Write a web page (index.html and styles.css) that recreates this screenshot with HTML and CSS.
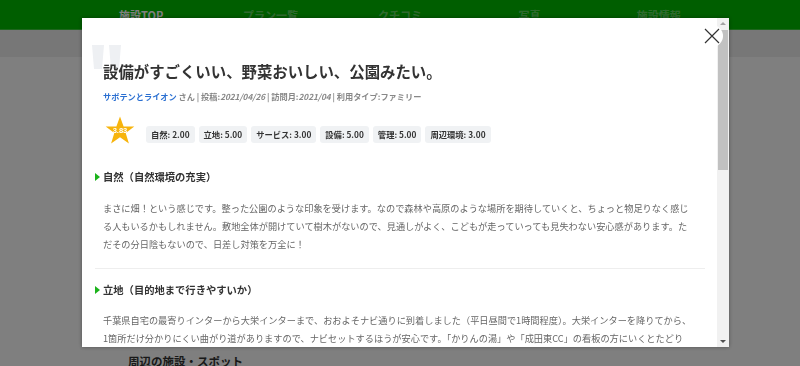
FILE: index.html
```html
<!DOCTYPE html>
<html lang="ja">
<head>
<meta charset="utf-8">
<title>クチコミ</title>
<link rel="stylesheet" href="styles.css">
</head>
<body>
<header class="topnav">
  <nav class="topnav-inner">
    <a class="nav-item active">施設TOP</a>
    <a class="nav-item">プラン一覧</a>
    <a class="nav-item">クチコミ</a>
    <a class="nav-item">写真</a>
    <a class="nav-item">施設情報</a>
  </nav>
</header>
<div class="subbar"></div>
<main class="page">
  <h2 class="page-heading">周辺の施設・スポット</h2>
</main>

<div class="overlay"></div>

<div class="modal">
  <svg class="quote" width="30" height="24" viewBox="0 0 30 24">
    <polygon points="0,0 12,0 10,24 2,24" fill="#eef0f3"/>
    <polygon points="17,0 29,0 27,24 19,24" fill="#eef0f3"/>
  </svg>
  <div class="modal-body">
    <h1 class="review-title">設備がすごくいい、野菜おいしい、公園みたい。</h1>
    <p class="meta"><span class="author">サボテンとライオン</span> さん | 投稿:<i>2021/04/26</i> | 訪問月:<i>2021/04</i> | 利用タイプ:ファミリー</p>
    <div class="ratings">
      <div class="star">
        <svg width="30" height="30" viewBox="0 0 30 30"><polygon points="15,0.5 18.6,10.6 29.3,10.6 20.7,17 23.9,27.5 15,21.2 6.1,27.5 9.3,17 0.7,10.6 11.4,10.6" fill="#f7b40c"/></svg>
        <span class="star-score">3.83</span>
      </div>
      <ul class="chips">
        <li class="chip">自然: 2.00</li>
        <li class="chip">立地: 5.00</li>
        <li class="chip">サービス: 3.00</li>
        <li class="chip">設備: 5.00</li>
        <li class="chip">管理: 5.00</li>
        <li class="chip">周辺環境: 3.00</li>
      </ul>
    </div>

    <section class="section">
      <h3 class="section-heading">自然（自然環境の充実）</h3>
      <p class="section-text">まさに畑！という感じです。整った公園のような印象を受けます。なので森林や高原のような場所を期待していくと、ちょっと物足りなく感じ<br>る人もいるかもしれません。敷地全体が開けていて樹木がないので、見通しがよく、こどもが走っていっても見失わない安心感があります。た<br>だその分日陰もないので、日差し対策を万全に！</p>
    </section>
    <hr class="divider">
    <section class="section">
      <h3 class="section-heading">立地（目的地まで行きやすいか）</h3>
      <p class="section-text">千葉県自宅の最寄りインターから大栄インターまで、おおよそナビ通りに到着しました（平日昼間で1時間程度）。大栄インターを降りてから、<br>1箇所だけ分かりにくい曲がり道がありますので、ナビセットするほうが安心です。「かりんの湯」や「成田東CC」の看板の方にいくとたどり<br>着けます。</p>
    </section>
  </div>
  <div class="scrollbar">
    <span class="sb-arrow up"></span>
    <span class="sb-thumb"></span>
    <span class="sb-track"></span>
    <span class="sb-arrow down"></span>
  </div>
  <button class="close" aria-label="閉じる">
    <svg width="16" height="16" viewBox="0 0 16 16"><path d="M1 1 L15 15 M15 1 L1 15" stroke="#333" stroke-width="1.2" fill="none"/></svg>
  </button>
</div>
</body>
</html>
```

FILE: styles.css
```css
* { box-sizing: border-box; }
html, body { margin: 0; padding: 0; }
body {
  font-family: "Noto Sans CJK JP", "Noto Sans", sans-serif;
  background: #fff;
  color: #333;
  height: 366px;
  overflow: hidden;
}

.topnav {
  height: 30px;
  background: #00bc00;
  border-bottom: 1px solid #3dcc3d;
}
.topnav-inner {
  width: 647px;
  margin: 0 auto;
  display: flex;
}
.nav-item {
  flex: 1;
  text-align: center;
  line-height: 30px;
  font-size: 11px;
  font-weight: bold;
  color: rgba(255,255,255,0.4);
}
.nav-item.active { color: #fff; }

.subbar {
  height: 27px;
  background: #eee;
}
.page { padding: 297px 0 0 128px; }
.page-heading {
  margin: 0;
  font-size: 11.5px;
  line-height: 14px;
  color: #333;
}

.overlay {
  position: fixed;
  inset: 0;
  background: rgba(0,0,0,0.5);
}

.modal {
  position: fixed;
  left: 82px;
  top: 18px;
  width: 647px;
  height: 329px;
  background: #fff;
  display: flex;
  box-shadow: 0 0 4px rgba(0,0,0,0.35);
}
.quote {
  position: absolute;
  left: 10px;
  top: 27px;
}
.modal-body {
  position: relative;
  flex: 1;
  overflow: hidden;
  padding: 43px 12px 0 13px;
}

.review-title {
  margin: 0 0 0 8px;
  font-size: 15.4px;
  line-height: 20px;
  font-weight: bold;
  color: #333;
}
.meta {
  margin: 9px 0 0 8px;
  font-size: 8.2px;
  line-height: 12px;
  color: #888;
  font-weight: bold;
}
.meta i { font-style: italic; }
.author { color: #2a6fd1; }

.ratings {
  display: flex;
  align-items: flex-start;
  margin: 14px 0 0 10px;
}
.star {
  position: relative;
  width: 30px;
  height: 30px;
}
.star svg { display: block; }
.star-score {
  position: absolute;
  left: -4px;
  right: -4px;
  top: 10px;
  text-align: center;
  font-family: "Liberation Sans", sans-serif;
  font-size: 7.5px;
  line-height: 9px;
  font-weight: bold;
  color: #fff;
}
.chips {
  list-style: none;
  margin: 10px 0 0 11px;
  padding: 0;
  display: flex;
  gap: 4px;
}
.chip {
  height: 17px;
  line-height: 17px;
  padding: 0 5px;
  background: #f0f2f4;
  border-radius: 3px;
  font-size: 8.3px;
  font-weight: bold;
  color: #333;
}

.section-heading {
  margin: 24px 0 0;
  padding-left: 8px;
  position: relative;
  font-size: 10.3px;
  line-height: 14px;
  font-weight: bold;
  color: #333;
}
.section-heading::before {
  content: "";
  position: absolute;
  left: 0;
  top: 3px;
  border-left: 5px solid #1bb31b;
  border-top: 4px solid transparent;
  border-bottom: 4px solid transparent;
}
.section-text {
  margin: 15px 0 0 8px;
  font-size: 9.2px;
  line-height: 18px;
  color: #666;
  white-space: nowrap;
}
.divider {
  margin: 15px 0 0;
  border: 0;
  border-top: 1px solid #eeeeee;
}
.divider + .section .section-heading { margin-top: 14px; }
.divider + .section .section-text { margin-top: 14px; }

.scrollbar {
  width: 12px;
  background: #f1f1f1;
  display: flex;
  flex-direction: column;
  align-items: center;
}
.sb-arrow {
  width: 0;
  height: 0;
  border-left: 3px solid transparent;
  border-right: 3px solid transparent;
  margin: 4px 0;
}
.sb-arrow.up { border-bottom: 3px solid #a3a3a3; }
.sb-arrow.down { border-top: 3px solid #505050; }
.sb-thumb {
  width: 10px;
  height: 140px;
  background: #c1c1c1;
  margin-top: 1px;
}
.sb-track { flex: 1; }

.close {
  position: absolute;
  right: 6px;
  top: 7px;
  width: 22px;
  height: 22px;
  border: 0;
  padding: 3px;
  border-radius: 50%;
  background: #fff;
  display: flex;
  align-items: center;
  justify-content: center;
}
.close svg { display: block; }
```
